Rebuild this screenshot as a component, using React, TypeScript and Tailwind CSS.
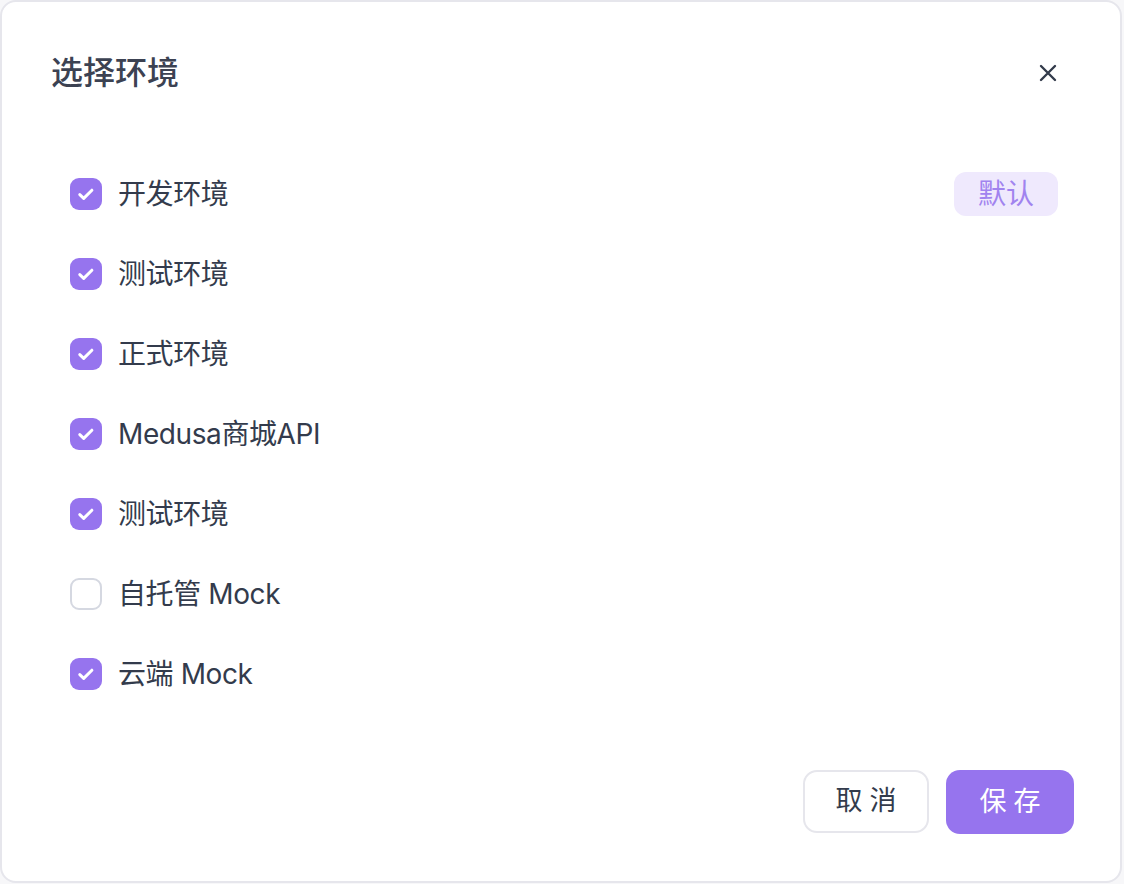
import React from "react";

const items: { label: string; checked: boolean; isDefault?: boolean }[] = [
  { label: "开发环境", checked: true, isDefault: true },
  { label: "测试环境", checked: true },
  { label: "正式环境", checked: true },
  { label: "Medusa商城API", checked: true },
  { label: "测试环境", checked: true },
  { label: "自托管 Mock", checked: false },
  { label: "云端 Mock", checked: true },
];

function Check({ checked }: { checked: boolean }) {
  if (!checked) {
    return <div className="w-[32px] h-[32px] rounded-[9px] border-2 border-[#d5d8e1] bg-white shrink-0" />;
  }
  return (
    <div className="w-[32px] h-[32px] rounded-[9px] bg-[#9674ee] flex items-center justify-center shrink-0">
      <svg width="32" height="32" viewBox="0 0 32 32" fill="none">
        <path d="M9.8 16.6l3.9 3.8 8.2-8.2" stroke="white" strokeWidth="3" strokeLinecap="round" strokeLinejoin="round" />
      </svg>
    </div>
  );
}

export default function App() {
  return (
    <div
      className="w-[1124px] h-[884px] bg-[#f7f7f9]"
      style={{ fontFamily: '"Inter", "Noto Sans CJK SC", sans-serif' }}
    >
      <div className="w-[1122px] h-[883px] bg-white border-2 border-[#e6e6ec] rounded-[16px] flex flex-col">
        <div className="h-[152px] flex items-start justify-between pl-[49px] pr-[62px] pt-[50px]">
          <div className="text-[32px] leading-[42px] font-medium text-[#3c4252]">选择环境</div>
          <svg width="20" height="20" viewBox="0 0 20 20" className="mt-[11px]" fill="none">
            <path d="M3 3l14 14M17 3L3 17" stroke="#333b4b" strokeWidth="2.4" strokeLinecap="round" />
          </svg>
        </div>
        <div className="flex flex-col pl-[68px] pr-[62px]">
          {items.map((it, i) => (
            <div key={i} className="h-[80px] flex items-center">
              <Check checked={it.checked} />
              <div className="ml-[16px] text-[28px] text-[#333b4c] leading-none tracking-[-0.4px]">{it.label}</div>
              {it.isDefault && (
                <div className="ml-auto w-[104px] h-[44px] rounded-[12px] bg-[#efe9fd] text-[#a183ef] text-[28px] flex items-center justify-center">
                  默认
                </div>
              )}
            </div>
          ))}
        </div>
        <div className="flex justify-end gap-[17px] pr-[46px] mt-[56px]">
          <button className="w-[126px] h-[63px] rounded-[14px] border-2 border-[#e6e6ec] bg-white text-[27px] text-[#333b4c] tracking-[7px] flex items-center justify-center">
            <span className="pl-[7px]">取消</span>
          </button>
          <button className="w-[128px] h-[64px] rounded-[14px] bg-[#9674ee] text-white text-[27px] tracking-[7px] flex items-center justify-center">
            <span className="pl-[7px]">保存</span>
          </button>
        </div>
      </div>
    </div>
  );
}
